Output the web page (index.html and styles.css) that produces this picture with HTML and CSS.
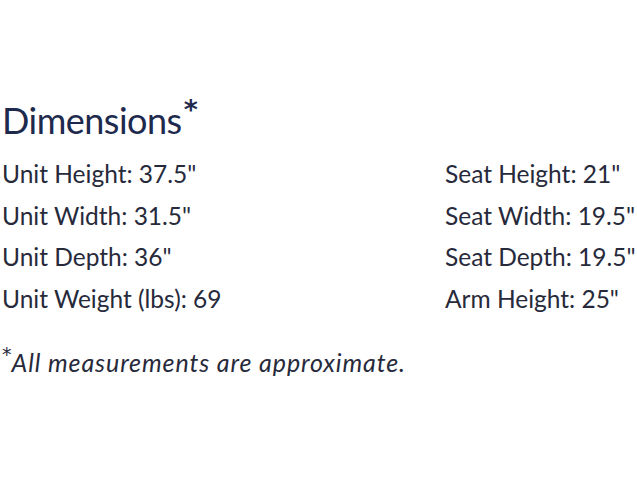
FILE: index.html
```html
<!DOCTYPE html>
<html lang="en">
<head>
<meta charset="utf-8">
<title>Dimensions</title>
<link rel="stylesheet" href="styles.css">
</head>
<body>
<section class="dims">
  <h2 class="dims-title">Dimensions<sup class="star">*</sup></h2>
  <div class="dims-grid">
    <div class="dim">Unit Height: 37.5"</div>
    <div class="dim">Seat Height: 21"</div>
    <div class="dim">Unit Width: 31.5"</div>
    <div class="dim">Seat Width: 19.5"</div>
    <div class="dim">Unit Depth: 36"</div>
    <div class="dim">Seat Depth: 19.5"</div>
    <div class="dim">Unit Weight (lbs): 69</div>
    <div class="dim">Arm Height: 25"</div>
  </div>
  <p class="note"><sup class="note-star">*</sup>All measurements are approximate.</p>
</section>
</body>
</html>
```
FILE: styles.css
```css
html, body {
  margin: 0;
  padding: 0;
  background: #ffffff;
}
body {
  font-family: "Lato", "Open Sans", sans-serif;
  color: #272a3b;
}
.dims {
  padding: 96px 0 0 2px;
  width: 635px;
}
.dims-title {
  margin: 0;
  font-weight: 400;
  font-size: 36px;
  line-height: 48px;
  color: #1e2a4d;
  letter-spacing: -0.5px;
}
.star {
  font-family: "DejaVu Sans", sans-serif;
  font-weight: 700;
  font-size: 27px;
  vertical-align: 0;
  position: relative;
  top: -15px;
  margin-left: 2px;
}
.dims-grid {
  display: grid;
  grid-template-columns: 443px auto;
  grid-auto-rows: 41.7px;
  margin-top: 4px;
}
.dim {
  font-size: 24.5px;
  line-height: 41.7px;
  font-weight: 400;
  white-space: nowrap;
}
.note {
  margin: 27px 0 0 0;
  font-style: italic;
  font-weight: 400;
  font-size: 25px;
  line-height: 30px;
  letter-spacing: 0.9px;
}
.note-star {
  font-family: "DejaVu Sans", sans-serif;
  font-style: normal;
  font-size: 19px;
  vertical-align: 0;
  position: relative;
  top: -11px;
  margin-right: 0;
  letter-spacing: 0;
}
```
